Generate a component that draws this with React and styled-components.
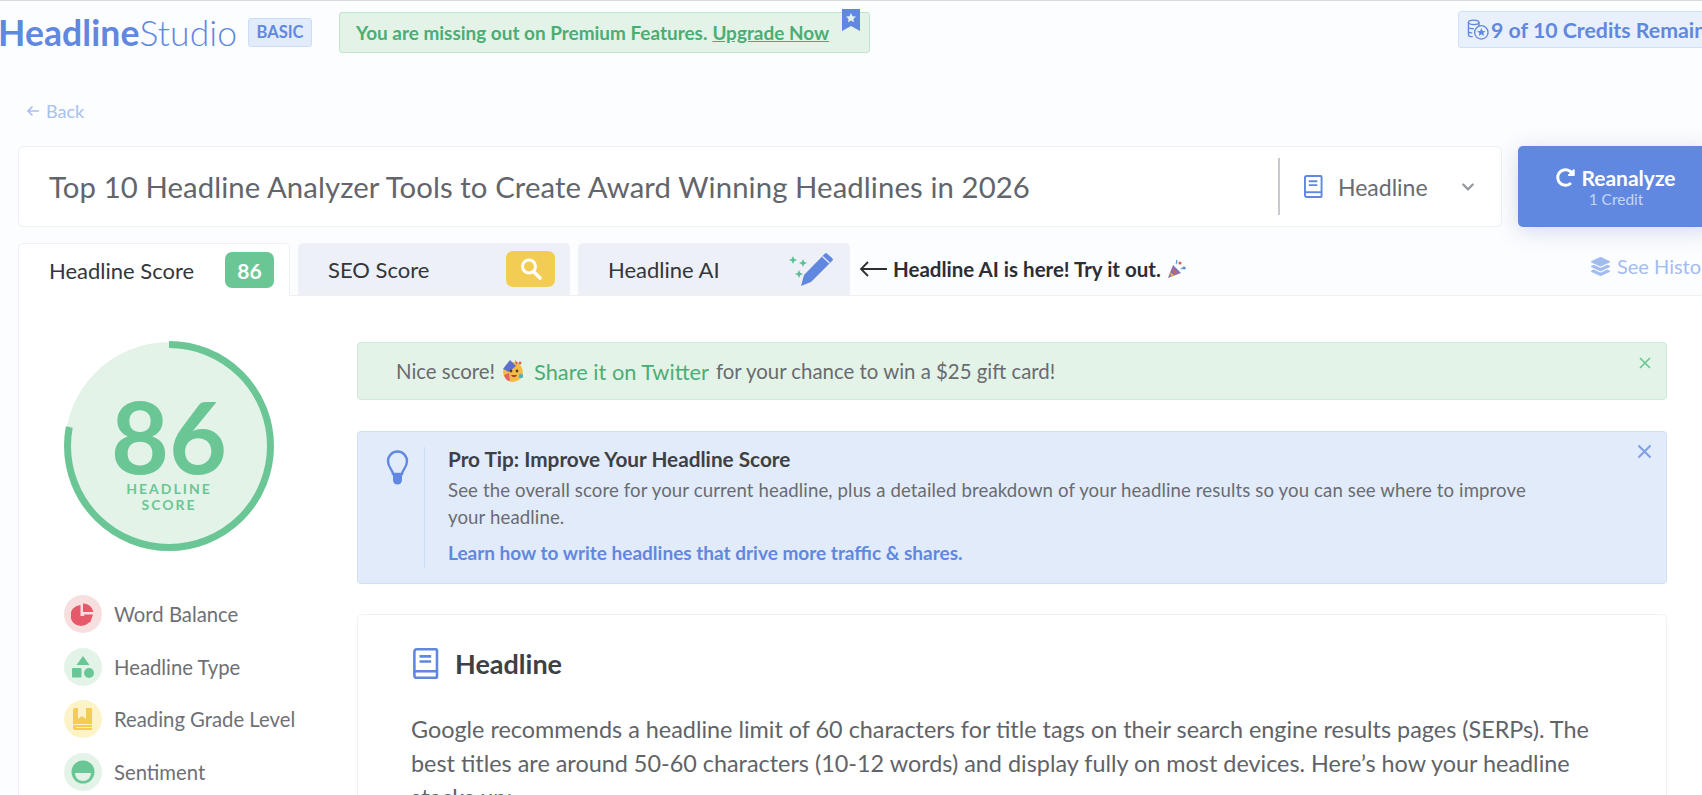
import React from "react";
import styled, { createGlobalStyle } from "styled-components";
import { FaLayerGroup, FaRedoAlt, FaChevronDown } from "react-icons/fa";

const GlobalStyle = createGlobalStyle`
	html, body {
		margin: 0;
		padding: 0;
		background: #fcfdff;
		overflow: hidden;
	}
	* {
		box-sizing: border-box;
	}
	body {
		font-family: "Lato", "Open Sans", sans-serif;
		color: #5f6268;
	}
`;

const Page = styled.div`
	width: 1702px;
	height: 795px;
	overflow: hidden;
	border-top: 1px solid #dcdad6;
`;

const TopBar = styled.header`
	display: flex;
	align-items: center;
	height: 62px;
	width: 1760px;
	margin-left: -2px;
`;

const Logo = styled.div`
	width: 250px;
	color: #6088e0;
	font-size: 35.5px;
	font-weight: 700;
	letter-spacing: 0.1px;
	white-space: nowrap;
	span {
		font-weight: 300;
	}
`;

const PlanBadge = styled.div`
	display: flex;
	align-items: center;
	justify-content: center;
	width: 64px;
	height: 29px;
	background: #e2ebf9;
	border: 1px solid #ccdcf5;
	border-radius: 3px;
	color: #6088e0;
	font-size: 16.5px;
	font-weight: 700;
`;

const UpgradeBanner = styled.div`
	position: relative;
	display: flex;
	align-items: center;
	width: 531px;
	height: 41px;
	margin-left: 27px;
	padding-left: 16px;
	background: #e4f3e8;
	border: 1px solid #bfe5cc;
	border-radius: 3px;
	color: #4aae74;
	font-size: 18.95px;
	font-weight: 700;
	white-space: nowrap;
	a {
		margin-left: 5px;
		color: #4aae74;
		text-decoration: underline;
	}
`;

const Ribbon = styled.svg`
	position: absolute;
	top: -4px;
	right: 9px;
`;

const CreditsBox = styled.div`
	display: flex;
	align-items: center;
	gap: 2px;
	height: 37px;
	margin: -5px 0 0 588px;
	padding: 0 10px 0 8px;
	background: #e8f0fb;
	border: 1px solid #d3e1f7;
	border-radius: 3px;
	color: #6088e0;
	font-size: 21.3px;
	font-weight: 700;
	white-space: nowrap;
`;

const BackRow = styled.div`
	display: flex;
	align-items: center;
	gap: 6px;
	height: 20px;
	margin: 38px 0 0 26px;
	color: #a9c0ee;
	font-size: 18px;
`;

const Main = styled.main`
	width: 1760px;
	margin: 25px 0 0 18px;
`;

const SearchRow = styled.div`
	display: flex;
	gap: 16px;
	height: 81px;
`;

const SearchBox = styled.div`
	display: flex;
	align-items: center;
	width: 1484px;
	padding: 0 0 0 30px;
	background: #fff;
	border: 1px solid #eef0f5;
	border-radius: 5px;
`;

const HeadlineText = styled.div`
	flex: 1;
	color: #62656b;
	font-size: 29.3px;
	letter-spacing: 0.1px;
`;

const TypeSelect = styled.div`
	display: flex;
	align-items: center;
	width: 223px;
	height: 57px;
	padding-left: 24px;
	border-left: 2px solid #c9cacd;
	color: #686b71;
	font-size: 23px;
	svg:last-child {
		margin-left: 33px;
		color: #93969c;
	}
`;

const TypeLabel = styled.span`
	margin-left: 15px;
`;

const ReanalyzeButton = styled.button`
	display: flex;
	flex-direction: column;
	align-items: center;
	justify-content: center;
	width: 196px;
	border: 0;
	border-radius: 5px;
	background: #6088e0;
	color: #fff;
	font-family: inherit;
	box-shadow: 0 4px 22px rgba(60, 90, 160, 0.22);
`;

const ReanalyzeLabel = styled.span`
	display: flex;
	align-items: center;
	gap: 6px;
	font-size: 21px;
	font-weight: 700;
	line-height: 24px;
`;

const CreditCost = styled.span`
	color: #c5d4f4;
	font-size: 15.5px;
	line-height: 18px;
`;

const TabRow = styled.div`
	position: relative;
	display: flex;
	align-items: flex-end;
	gap: 8px;
	height: 53px;
	margin-top: 16px;
	border-bottom: 1px solid #eef0f6;
`;

const Tab = styled.div`
	display: flex;
	align-items: center;
	justify-content: space-between;
	width: 272px;
	height: ${(p) => (p.$active ? "53px" : "52px")};
	margin-bottom: ${(p) => (p.$active ? "-1px" : "0")};
	padding: 0 ${(p) => (p.$pen ? "16px" : "15px")} 0 30px;
	background: ${(p) => (p.$active ? "#fff" : "#eef0f8")};
	border: ${(p) => (p.$active ? "1px solid #eef0f6" : "0")};
	border-bottom: 0;
	border-radius: 5px 5px 0 0;
	color: #33363b;
	font-size: 22px;
	white-space: nowrap;
`;

const TabBadge = styled.div`
	display: flex;
	align-items: center;
	justify-content: center;
	width: 49px;
	height: 36px;
	border-radius: 7px;
	background: ${(p) => p.$bg};
	color: #fff;
	font-size: 21px;
	font-weight: 700;
`;

const Hint = styled.div`
	display: flex;
	align-items: center;
	align-self: center;
	gap: 6px;
	margin-left: 1px;
	color: #2c2e33;
	font-size: 20.5px;
	font-weight: 700;
	white-space: nowrap;
`;

const HistoryLink = styled.div`
	position: absolute;
	top: 11px;
	left: 1573px;
	display: flex;
	align-items: center;
	gap: 7px;
	color: #a3bcef;
	font-size: 20px;
	white-space: nowrap;
`;

const Panel = styled.section`
	display: flex;
	height: 500px;
	background: #fff;
	border-left: 1px solid #eef0f6;
`;

const Sidebar = styled.aside`
	flex-shrink: 0;
	width: 338px;
	padding: 45px 0 0 45px;
`;

const ScoreRing = styled.div`
	position: relative;
	width: 210px;
	height: 210px;
`;

const ScoreText = styled.div`
	position: absolute;
	inset: 0;
	display: flex;
	flex-direction: column;
	align-items: center;
	color: #6bc695;
`;

const ScoreValue = styled.div`
	margin-top: 44px;
	font-size: 100px;
	font-weight: 700;
	line-height: 100px;
`;

const ScoreLabel = styled.div`
	margin-top: -4px;
	font-size: 14px;
	font-weight: 700;
	letter-spacing: 2px;
	line-height: 15.5px;
	text-align: center;
`;

const MetricList = styled.ul`
	display: flex;
	flex-direction: column;
	gap: 14.5px;
	margin: 44px 0 0;
	padding: 0;
	list-style: none;
`;

const Metric = styled.li`
	display: flex;
	align-items: center;
	gap: 12px;
	color: #6e7076;
	font-size: 20.3px;
	white-space: nowrap;
`;

const MetricIcon = styled.div`
	display: flex;
	align-items: center;
	justify-content: center;
	width: 38px;
	height: 38px;
	border-radius: 50%;
	background: ${(p) => p.$bg};
`;

const Content = styled.div`
	display: flex;
	flex-direction: column;
	width: 1310px;
	padding-top: 46px;
`;

const SuccessAlert = styled.div`
	position: relative;
	flex-shrink: 0;
	display: flex;
	align-items: center;
	gap: 7px;
	height: 58px;
	padding-left: 38px;
	background: #e4f3e8;
	border: 1px solid #cdebd8;
	border-radius: 4px;
	color: #686b70;
	font-size: 20.4px;
	white-space: nowrap;
	a {
		margin-left: 3px;
		color: #4aae74;
		font-size: 21.8px;
		text-decoration: none;
	}
`;

const CloseButton = styled.svg`
	position: absolute;
	top: ${(p) => p.$top}px;
	right: 14px;
`;

const TipBox = styled.div`
	position: relative;
	flex-shrink: 0;
	display: flex;
	height: 153px;
	margin-top: 31px;
	padding: 15px 0 0 28px;
	background: #e2ebf9;
	border: 1px solid #cfdff6;
	border-radius: 4px;
`;

const TipIcon = styled.div`
	width: 39px;
	height: 121px;
	border-right: 1px solid #cbdcf5;
	margin-right: 23px;
	padding-top: 3px;
`;

const TipBody = styled.div`
	width: 1090px;
`;

const TipTitle = styled.div`
	color: #3d4045;
	font-size: 20.75px;
	font-weight: 700;
	line-height: 24px;
`;

const TipText = styled.p`
	margin: 6px 0 0;
	color: #696c72;
	font-size: 18.6px;
	letter-spacing: 0.12px;
	line-height: 27px;
`;

const TipLink = styled.a`
	display: block;
	margin-top: 10px;
	color: #6088e0;
	font-size: 19px;
	font-weight: 700;
	text-decoration: none;
`;

const Card = styled.div`
	flex-shrink: 0;
	height: 300px;
	margin-top: 30px;
	padding: 33px 0 0 53px;
	background: #fff;
	border: 1px solid #eef2f7;
	border-radius: 5px;
`;

const CardTitle = styled.h2`
	display: flex;
	align-items: center;
	gap: 16px;
	margin: 0 0 0 2px;
	color: #3d4045;
	font-size: 27px;
	font-weight: 700;
	line-height: 31px;
`;

const CardText = styled.p`
	width: 1215px;
	margin: 33px 0 0;
	color: #606368;
	font-size: 23.4px;
	line-height: 34px;
`;

const BookIcon = ({ width, height }) => (
	<svg width={width} height={height} viewBox="0 0 20 24" fill="none" style={{ flexShrink: 0 }}>
		<path d="M3 1h14.5a1 1 0 0 1 1 1v20a1 1 0 0 1-1 1H3a2 2 0 0 1-2-2V3a2 2 0 0 1 2-2z" stroke="#6088e0" strokeWidth="2" />
		<path d="M1 18h17.5" stroke="#6088e0" strokeWidth="2" />
		<path d="M5 6.5h9M5 10.5h9" stroke="#6088e0" strokeWidth="2" />
	</svg>
);

const Coins = () => (
	<svg width="22" height="24" viewBox="0 0 23 24" fill="none" stroke="#6088e0" strokeWidth="1.4">
		<ellipse cx="7" cy="4" rx="5.5" ry="2.4" />
		<path d="M1.5 4v13c0 1.2 2 2 4.5 2M1.5 8.5c0 1.2 2.5 2.2 5.5 2.2M1.5 13c0 1.2 2 2 4 2M12.5 4v4" />
		<circle cx="15" cy="14.5" r="7" fill="#e8f0fb" />
		<path d="M15 10l1.3 3 3.1.2-2.4 2 .8 3-2.8-1.7-2.8 1.7.8-3-2.4-2 3.1-.2z" fill="#6088e0" stroke="none" />
	</svg>
);

const MagnifyIcon = () => (
	<svg width="24" height="24" viewBox="0 0 24 24" fill="none" stroke="#fff">
		<circle cx="10" cy="9.500" r="6.500" strokeWidth="3" />
		<path d="M15 15l6 6" strokeWidth="3.600" strokeLinecap="round" />
	</svg>
);

const PencilSpark = () => (
	<svg width="47" height="36" viewBox="0 0 47 36" fill="none">
		<path d="M14 35l3-11L38 2.500a1.500 1.500 0 0 1 2 0l5.500 5a1.500 1.500 0 0 1 0 2L24 31z" fill="#6088e0" />
		<path d="M35.500 5.500l7 6.500" stroke="#eef0f8" strokeWidth="1.200" />
		<path d="M6 5l1.200 2.800L10 9 7.200 10.200 6 13l-1.200-2.800L2 9l2.800-1.200zM16 8l1.200 2.800L20 12l-2.800 1.200L16 16l-1.200-2.800L12 12l2.800-1.200zM12 19l1.200 2.800L16 23l-2.800 1.200L12 27l-1.200-2.800L8 23l2.800-1.200z" fill="#5dc096" />
	</svg>
);

const PartyPopper = () => (
	<svg width="20" height="20" viewBox="0 0 20 20">
		<path d="M1 19l5-13 8 8z" fill="#8a6fb0" />
		<path d="M3.500 13l3.500 3.500-3 1.200z" fill="#f4b63f" />
		<path d="M5 9l5 5-2.500 1z" fill="#e0604f" />
		<circle cx="13" cy="4" r="1.600" fill="#e0604f" />
		<circle cx="17" cy="9" r="1.400" fill="#6088e0" />
		<path d="M9 5c1-1 1-2.500 .5-4M14 10c1.500-1 3-1.200 5-.5" stroke="#4f9bd9" strokeWidth="1.300" fill="none" />
	</svg>
);

const PartyFace = () => (
	<svg width="22" height="24" viewBox="0 0 22 24">
		<circle cx="11" cy="13" r="10" fill="#f2bd45" />
		<path d="M1 10L8 1l6 6-7 6z" fill="#5c6fd0" />
		<path d="M2 16l5-2 1 8c-3 0-5-3-6-6z" fill="#e5606f" />
		<path d="M13 1l3 3-2 2z" fill="#e0604f" />
		<circle cx="9" cy="12" r="1.400" fill="#55402a" />
		<circle cx="15" cy="12" r="1.400" fill="#55402a" />
		<path d="M9 16c1.500 3 4.500 3 6 0z" fill="#a8442e" />
		<circle cx="19" cy="17" r="2.200" fill="#4fb0c4" />
		<circle cx="18" cy="4" r="1.500" fill="#e0604f" />
	</svg>
);

const metrics = [
	{
		label: "Word Balance",
		bg: "#f8dfdf",
		icon: (
			<svg width="24" height="24" viewBox="0 0 24 24" fill="#e5596a">
				<path d="M9.500 3v11h11A10.500 10.500 0 1 1 9.500 3z" />
				<path d="M12 1.500A10.500 10.500 0 0 1 22.500 10H12z" />
				<path d="M12.500 12.500h9.500l-3 8.500z" />
			</svg>
		),
	},
	{
		label: "Headline Type",
		bg: "#e4f3e8",
		icon: (
			<svg width="24" height="24" viewBox="0 0 24 24" fill="#6bc695">
				<path d="M12 1l6.500 9h-13z" />
				<rect x="1" y="13" width="9.500" height="9.500" rx="1" />
				<circle cx="18" cy="18" r="5" />
			</svg>
		),
	},
	{
		label: "Reading Grade Level",
		bg: "#fdf3c9",
		icon: (
			<svg width="22" height="24" viewBox="0 0 22 24" fill="#f2cc53">
				<path d="M3 1h3v11l4-3 4 3V1h5a1 1 0 0 1 1 1v15H3a2 2 0 0 0-2 2V3a2 2 0 0 1 2-2z" />
				<path d="M1 20a2 2 0 0 1 2-2h17v2H4v1h16v2H3a2 2 0 0 1-2-2z" />
			</svg>
		),
	},
	{
		label: "Sentiment",
		bg: "#e4f3e8",
		icon: (
			<svg width="24" height="24" viewBox="0 0 24 24">
				<circle cx="12" cy="12" r="11.500" fill="#6bc695" />
				<path d="M4 13h16a8 8 0 0 1-16 0z" fill="#e4f3e8" />
			</svg>
		),
	},
];

const App = () => (
	<>
		<GlobalStyle />
		<Page>
			<TopBar>
				<Logo>
					Headline<span>Studio</span>
				</Logo>
				<PlanBadge>BASIC</PlanBadge>
				<UpgradeBanner>
					You are missing out on Premium Features. <a href="#upgrade">Upgrade Now</a>
					<Ribbon width="18" height="22" viewBox="0 0 18 22">
						<path d="M0 0h18v22l-9-5-9 5z" fill="#6088e0" />
						<path d="M9 4l1.500 3.200 3.500.4-2.600 2.300.7 3.400L9 11.600l-3.100 1.700.7-3.400L4 7.600l3.500-.4z" fill="#e4f3e8" />
					</Ribbon>
				</UpgradeBanner>
				<CreditsBox>
					<Coins />
					9 of 10 Credits Remaining
				</CreditsBox>
			</TopBar>
			<BackRow>
				<svg width="14" height="12" viewBox="0 0 14 12" fill="none" stroke="#a9c0ee" strokeWidth="1.600">
					<path d="M13 6H2M6.500 1.500L2 6l4.500 4.500" />
				</svg>
				Back
			</BackRow>
			<Main>
				<SearchRow>
					<SearchBox>
						<HeadlineText>Top 10 Headline Analyzer Tools to Create Award Winning Headlines in 2026</HeadlineText>
						<TypeSelect>
							<BookIcon width={19} height={23} />
							<TypeLabel>Headline</TypeLabel>
							<FaChevronDown size={14} />
						</TypeSelect>
					</SearchBox>
					<ReanalyzeButton>
						<ReanalyzeLabel>
							<FaRedoAlt size={19} />
							Reanalyze
						</ReanalyzeLabel>
						<CreditCost>1 Credit</CreditCost>
					</ReanalyzeButton>
				</SearchRow>
				<TabRow>
					<Tab $active>
						Headline Score
						<TabBadge $bg="#6bc695">86</TabBadge>
					</Tab>
					<Tab>
						SEO Score
						<TabBadge $bg="#f2cc53">
							<MagnifyIcon />
						</TabBadge>
					</Tab>
					<Tab $pen>
						Headline AI
						<PencilSpark />
					</Tab>
					<Hint>
						<svg width="28" height="16" viewBox="0 0 28 16" fill="none" stroke="#2c2e33" strokeWidth="1.800">
							<path d="M28 8H2M9 1L2 8l7 7" />
						</svg>
						Headline AI is here! Try it out.
						<PartyPopper />
					</Hint>
					<HistoryLink>
						<FaLayerGroup size={19} />
						See History
					</HistoryLink>
				</TabRow>
				<Panel>
					<Sidebar>
						<ScoreRing>
							<svg width="210" height="210" viewBox="0 0 210 210">
								<circle cx="105" cy="105" r="104" fill="#e4f3e8" />
								<circle
									cx="105"
									cy="105"
									r="101.500"
									fill="none"
									stroke="#6bc695"
									strokeWidth="7"
									pathLength="100"
									strokeDasharray="78 22"
									transform="rotate(-90 105 105)"
								/>
							</svg>
							<ScoreText>
								<ScoreValue>86</ScoreValue>
								<ScoreLabel>
									HEADLINE
									<br />
									SCORE
								</ScoreLabel>
							</ScoreText>
						</ScoreRing>
						<MetricList>
							{metrics.map((m) => (
								<Metric key={m.label}>
									<MetricIcon $bg={m.bg}>{m.icon}</MetricIcon>
									{m.label}
								</Metric>
							))}
						</MetricList>
					</Sidebar>
					<Content>
						<SuccessAlert>
							Nice score!
							<PartyFace />
							<a href="#twitter">Share it on Twitter</a>
							for your chance to win a $25 gift card!
							<CloseButton $top={13} width="14" height="14" viewBox="0 0 14 14" stroke="#6bc695" strokeWidth="1.700">
								<path d="M2 2l10 10M12 2L2 12" />
							</CloseButton>
						</SuccessAlert>
						<TipBox>
							<TipIcon>
								<svg width="23" height="35" viewBox="0 0 23 35" fill="none">
									<path d="M7 24c0-4-5-6-5-13a9.500 9.500 0 0 1 19 0c0 7-5 9-5 13z" stroke="#6088e0" strokeWidth="2.400" />
									<path d="M7 24h9v6a4.500 4.500 0 0 1-9 0z" fill="#6088e0" />
								</svg>
							</TipIcon>
							<TipBody>
								<TipTitle>Pro Tip: Improve Your Headline Score</TipTitle>
								<TipText>
									See the overall score for your current headline, plus a detailed breakdown of your headline results so you can see where to improve your headline.
								</TipText>
								<TipLink href="#learn">Learn how to write headlines that drive more traffic &amp; shares.</TipLink>
							</TipBody>
							<CloseButton $top={12} width="15" height="15" viewBox="0 0 15 15" stroke="#7d9fe6" strokeWidth="2">
								<path d="M1.500 1.500l12 12M13.500 1.500l-12 12" />
							</CloseButton>
						</TipBox>
						<Card>
							<CardTitle>
								<BookIcon width={26} height={31} />
								Headline
							</CardTitle>
							<CardText>
								Google recommends a headline limit of 60 characters for title tags on their search engine results pages (SERPs). The best titles are around 50-60 characters (10-12 words) and display fully on most devices. Here’s how your headline stacks up:
							</CardText>
						</Card>
					</Content>
				</Panel>
			</Main>
		</Page>
	</>
);

export default App;
